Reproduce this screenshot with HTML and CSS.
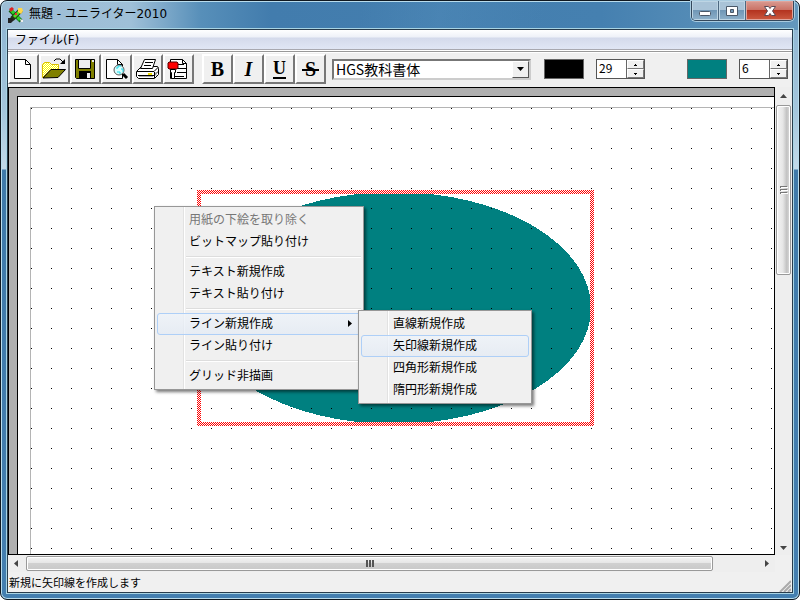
FILE: index.html
```html
<!DOCTYPE html>
<html lang="ja">
<head>
<meta charset="utf-8">
<title>無題 - ユニライター2010</title>
<link rel="stylesheet" href="styles.css">
</head>
<body>
<div class="window">
  <header class="titlebar">
    <svg class="app-icon" viewBox="0 0 16 16" width="16" height="16" aria-hidden="true">
      <path d="M2 3L13 14" stroke="#125c12" stroke-width="4"/>
      <path d="M3 3L12 13" stroke="#2bd52b" stroke-width="3"/>
      <path d="M13 3L4 12" stroke="#223c18" stroke-width="5"/>
      <path d="M12 4L6 10" stroke="#55dd22" stroke-width="3"/>
      <path d="M0 11h4l2 2-3 3H0z" fill="#222"/>
      <path d="M10 1h4l1 3-2 3-3-2z" fill="#ffd84a"/>
      <path d="M1 2l3-2 2 2-3 3z" fill="#e02020"/>
      <path d="M7 6h2v2H7z" fill="#e33"/>
      <path d="M12 12l3 1v2h-2z" fill="#eee"/>
    </svg>
    <h1 class="title">無題 - ユニライター2010</h1>
    <div class="caption-buttons">
      <button class="cap" aria-label="最小化"><svg viewBox="0 0 14 12" width="14" height="12"><rect x="1.500" y="6.500" width="11" height="4" rx="1" fill="#fff" stroke="#4a5868"/></svg></button>
      <button class="cap" aria-label="最大化"><svg viewBox="0 0 14 12" width="14" height="12"><path d="M1.500 1.500h11v9h-11zM5.500 4.500v3h3v-3z" fill="#fff" fill-rule="evenodd" stroke="#4a5868"/></svg></button>
      <button class="cap cap-close" aria-label="閉じる"><svg viewBox="0 0 14 12" width="14" height="12"><path d="M1.500 1.500h4L7 3.500l1.500-2h4L9.500 6l3 4.500h-4L7 8.500l-1.500 2h-4L4.500 6z" fill="#fff" stroke="#5a4a55"/></svg></button>
    </div>
  </header>

  <div class="client">
    <nav class="menubar"><button class="menu-title">ファイル(F)</button></nav>

    <div class="toolbar">
      <div class="group">
        <button class="tool" aria-label="新規">
          <svg viewBox="2 2 27 26" width="27" height="26"><path d="M6.500 5.500h11l5 5v14h-16z" fill="#fff" stroke="#000"/><path d="M17.500 5.500v5h5" fill="none" stroke="#000"/></svg>
        </button>
        <button class="tool" aria-label="開く">
          <svg viewBox="2 2 27 26" width="27" height="26">
            <defs><pattern id="straw" width="2" height="2" patternUnits="userSpaceOnUse"><rect width="2" height="2" fill="#fff"/><path d="M0 0h1v1H0zM1 1h1v1H1z" fill="#ff0"/></pattern></defs>
            <path d="M3.500 23.500v-13l2-2h5l2 2h7v5h-8z" fill="url(#straw)" stroke="#d8c000"/>
            <path d="M4 24l8-8.500h14.500L19 23.500z" fill="#808000" stroke="#000"/>
            <path d="M15 7l2-2h4l4 4" fill="none" stroke="#000"/><path d="M26 5v5h-5z"/>
          </svg>
        </button>
        <button class="tool" aria-label="保存">
          <svg viewBox="2 2 27 26" width="27" height="26"><path d="M5.500 5.500h19v19h-18l-1-1z" fill="#808000" stroke="#000"/><path d="M8.500 5.500h12v9h-12z" fill="#efefef" stroke="#000"/><path d="M9 17h12v8H9z"/><path d="M17 19h3v5h-3zM22 6h2v2h-2z" fill="#efefef"/></svg>
        </button>
        <button class="tool" aria-label="印刷プレビュー">
          <svg viewBox="2 2 27 26" width="27" height="26"><path d="M5.500 5.500h11l5 5v14h-16z" fill="#fff" stroke="#000"/><path d="M16.500 5.500v5h5" fill="none" stroke="#000"/><circle cx="18" cy="16" r="5" fill="#d8ffff" stroke="#555"/><path d="M15 14h2v-2h3M16 18h3v2M20 15h2v3" fill="none" stroke="#20d8e8"/><path d="M22 20l4 4" stroke="#000" stroke-width="3"/></svg>
        </button>
        <button class="tool" aria-label="印刷">
          <svg viewBox="2 2 27 26" width="27" height="26"><path d="M4.500 17.500l5-5h16l1 2v6l-4 4h-16l-2-2z" fill="#fff" stroke="#000"/><path d="M8.500 14.500l4-9h11l-3 9z" fill="#fff" stroke="#000"/><path d="M13 8.500h8M12 11.500h7M5 17.500h17l4-4M22.500 18v6M6 21.500h16l4-4" fill="none" stroke="#000"/><path d="M7 22.500h14M24 18v4" stroke="#aaa"/><path d="M16 19h4v2h-4z" fill="#f0e000"/></svg>
        </button>
        <button class="tool" aria-label="ページ設定">
          <svg viewBox="2 2 27 26" width="27" height="26"><path d="M7.500 5.500h12l4 4v15h-16z" fill="#fff" stroke="#000"/><path d="M19.500 5.500v4h4M15 10.500h6M15 14.500h9M14 18.500h10M12 22.500h9" fill="none" stroke="#000"/><path d="M6 8h8l1 1v5l-1 1H6l-1-1V9z" fill="#f00" stroke="#500"/><path d="M7.500 15.500h5v3h-1v6h-3v-6h-1z" fill="#fff" stroke="#000"/></svg>
        </button>
      </div>
      <div class="group">
        <button class="tool letter" aria-label="太字"><b>B</b></button>
        <button class="tool letter" aria-label="斜体"><i>I</i></button>
        <button class="tool letter under" aria-label="下線"><b>U</b></button>
        <button class="tool letter strike" aria-label="取り消し線"><b>S</b></button>
      </div>
      <div class="combo">
        <select aria-label="フォント"><option>HGS教科書体</option></select>
        <span class="drop" aria-hidden="true"><svg viewBox="0 0 7 4" width="7" height="4"><path d="M0 0h7L3.500 4z"/></svg></span>
      </div>
      <button class="swatch black" aria-label="文字色"></button>
      <div class="spin">
        <input value="29" aria-label="文字サイズ">
        <div class="steps">
          <button aria-label="大きく"><svg viewBox="0 0 3 2" width="3" height="2"><path d="M1 0h1v1h1v1H0V1h1z"/></svg></button>
          <button aria-label="小さく"><svg viewBox="0 0 3 2" width="3" height="2"><path d="M0 0h3v1H2v1H1V1H0z"/></svg></button>
        </div>
      </div>
      <button class="swatch teal" aria-label="線の色"></button>
      <div class="spin">
        <input value="6" aria-label="線の太さ">
        <div class="steps">
          <button aria-label="太く"><svg viewBox="0 0 3 2" width="3" height="2"><path d="M1 0h1v1h1v1H0V1h1z"/></svg></button>
          <button aria-label="細く"><svg viewBox="0 0 3 2" width="3" height="2"><path d="M0 0h3v1H2v1H1V1H0z"/></svg></button>
        </div>
      </div>
    </div>

    <main class="workspace">
      <div class="desk">
        <div class="paper">
          <svg class="drawing" width="100%" height="100%" aria-label="楕円形">
            <defs>
              <pattern id="grid" x="13" y="11" width="20" height="20" patternUnits="userSpaceOnUse"><rect width="1" height="1"/></pattern>
              <pattern id="check" width="2" height="2" patternUnits="userSpaceOnUse"><rect width="2" height="2" fill="#fff"/><path d="M0 0h1v1H0zM1 1h1v1H1z" fill="#f00"/></pattern>
            </defs>
            <path d="M12 2000V10H3000V11H13V2000z" fill="#b4b4b4"/>
            <ellipse cx="376" cy="211" rx="197" ry="116" fill="#008080"/>
            <rect x="13" y="11" width="100%" height="100%" fill="url(#grid)"/>
            <path d="M179 93h397v236H179zM183 97v228h389V97z" fill="url(#check)" fill-rule="evenodd"/>
          </svg>
        </div>
      </div>
      <div class="scroll vertical">
        <svg class="arrow" viewBox="0 0 7 4" width="7" height="4"><path d="M3.500 0L7 4H0z"/></svg>
        <div class="track"><div class="thumb"><svg viewBox="0 0 8 8" width="8" height="8"><path d="M0 0h7v2H0zM0 3h7v2H0zM0 6h7v2H0z" fill="#777"/><path d="M1 1h7v1H1zM1 4h7v1H1zM1 7h7v1H1z" fill="#fff"/></svg></div></div>
        <svg class="arrow" viewBox="0 0 7 4" width="7" height="4"><path d="M0 0h7L3.500 4z"/></svg>
      </div>
      <div class="scroll horizontal">
        <svg class="arrow" viewBox="0 0 4 7" width="4" height="7"><path d="M4 0v7L0 3.500z"/></svg>
        <div class="track"><div class="thumb"><svg viewBox="0 0 8 8" width="8" height="8"><path d="M0 0h2v7H0zM3 0h2v7H3zM6 0h2v7H6z" fill="#555"/></svg></div></div>
        <svg class="arrow" viewBox="0 0 4 7" width="4" height="7"><path d="M0 0l4 3.500L0 7z"/></svg>
      </div>

      <div class="menu context" role="menu">
        <button class="item" role="menuitem" disabled>用紙の下絵を取り除く</button>
        <button class="item" role="menuitem">ビットマップ貼り付け</button>
        <hr>
        <button class="item" role="menuitem">テキスト新規作成</button>
        <button class="item" role="menuitem">テキスト貼り付け</button>
        <hr>
        <button class="item hot" role="menuitem">ライン新規作成<svg viewBox="0 0 4 7" width="4" height="7"><path d="M0 0l4 3.500L0 7z"/></svg></button>
        <button class="item" role="menuitem">ライン貼り付け</button>
        <hr>
        <button class="item" role="menuitem">グリッド非描画</button>
      </div>
      <div class="menu submenu" role="menu">
        <button class="item" role="menuitem">直線新規作成</button>
        <button class="item hot" role="menuitem">矢印線新規作成</button>
        <button class="item" role="menuitem">四角形新規作成</button>
        <button class="item" role="menuitem">隋円形新規作成</button>
      </div>
    </main>

    <footer class="status">
      <span>新規に矢印線を作成します</span>
      <svg class="grip" viewBox="0 0 12 12" width="12" height="12"><path d="M1 12L12 1M5 12l7-7M9 12l3-3" stroke="#aaa" stroke-width="2"/></svg>
    </footer>
  </div>
</div>
</body>
</html>
```
FILE: styles.css
```css
* { box-sizing: border-box; }

body {
  margin: 0;
  background: #fff;
  font: 12px/16px "Noto Sans CJK JP", sans-serif;
  color: #000;
}

button, input, select {
  margin: 0;
  padding: 0;
  border: 0;
  border-radius: 0;
  background: none;
  font: inherit;
  color: inherit;
}

svg { display: block; flex: none; }

/* Window frame */
.window {
  display: flex;
  flex-direction: column;
  height: 100vh;
  padding: 0 6px 6px;
  border: 1px solid #101820;
  border-radius: 7px;
  background:
    linear-gradient(100deg, transparent 0 45%, #5590bd55 55%, transparent 68%) top / 100% 29px no-repeat,
    linear-gradient(90deg, #9dbdd5 0, #9fc0d8 130px, #578fb9 200px, #427cad 270px, #4580b0 600px, #6498bd 100%) top / 100% 29px no-repeat,
    linear-gradient(#8ab2d0 0, #a5c6dc 110px, #c3dae9 168px, #3f7aa9 169px, #447fb0 100%);
  box-shadow: inset 0 0 0 1px #b9dcec;
}

.titlebar {
  display: flex;
  align-items: flex-start;
  height: 28px;
  flex: none;
}

.app-icon { margin: 6px 5px 0 1px; }

.title {
  flex: 1;
  margin: 5px 0 0;
  font: 12px/16px "DejaVu Sans", "Noto Sans CJK JP", sans-serif;
}

.caption-buttons {
  display: flex;
  height: 20px;
  margin-right: -1px;
  border: 1px solid #34485c;
  border-top: 0;
  border-radius: 0 0 5px 5px;
  overflow: hidden;
  box-shadow: 0 0 0 1px #a9cbdf;
}

.cap {
  display: flex;
  align-items: center;
  justify-content: center;
  width: 27px;
  border-right: 1px solid #4c6880;
  background: linear-gradient(#a9c3d7 0 45%, #7097b6 50%, #8eb1ca);
  box-shadow: inset 0 0 0 1px #bdd5e4;
}

.cap-close {
  width: 47px;
  border-right: 0;
  background: linear-gradient(#d99b92 0, #cb7467 45%, #b43420 50%, #cb5a40);
  box-shadow: inset 0 0 0 1px #e0a59c;
}

.client {
  display: flex;
  flex: 1;
  flex-direction: column;
  min-height: 0;
  border: 1px solid #283c4c;
  background: #f0f0f0;
  box-shadow: 0 0 0 1px #a8d4e4;
}

.menubar {
  display: flex;
  align-items: center;
  height: 20px;
  flex: none;
  border-bottom: 1px solid #a8a8b0;
  background: linear-gradient(#fff 0, #eef1f8 7px, #d4daeb 8px, #e0e6f5 100%);
}

.menu-title {
  padding: 0 7px;
  font: 12px/16px "DejaVu Sans", "Noto Sans CJK JP", sans-serif;
}

/* Toolbar */
.toolbar {
  display: flex;
  align-items: center;
  height: 37px;
  flex: none;
  padding: 0 4px 0 0;
  border-top: 1px solid #fff;
  box-shadow: inset 0 1px #999, inset 0 2px #fff;
}

.group {
  display: flex;
  margin-right: 8px;
}

.group + .group { margin-right: 6px; }

.tool {
  display: flex;
  align-items: center;
  justify-content: center;
  width: 31px;
  height: 30px;
  border: 2px solid;
  border-color: #fff #777 #777 #fff;
}

.letter {
  font: 20px/24px "Liberation Serif", serif;
}

.letter i { font-weight: 700; }

.under b {
  height: 20px;
  border-bottom: 2px solid #000;
  font-size: 18px;
  line-height: 18px;
}

.strike b {
  padding: 0 3px;
  background: linear-gradient(#000, #000) center 12px / 100% 2px no-repeat;
}

.combo {
  position: relative;
  width: 199px;
  height: 21px;
  margin-right: 13px;
  border: 2px solid;
  border-color: #777 #ccc #ccc #777;
  background: #fff;
}

.combo select {
  display: block;
  width: 100%;
  height: 17px;
  padding-left: 2px;
  appearance: none;
  font-size: 14px;
  line-height: 16px;
}

.drop {
  position: absolute;
  top: 0;
  right: 0;
  bottom: 0;
  display: flex;
  align-items: center;
  justify-content: center;
  width: 17px;
  border: 1px solid;
  border-color: #fff #555 #555 #fff;
  background: #f0f0f0;
  pointer-events: none;
}

.swatch {
  width: 40px;
  height: 20px;
  border: 1px solid #666;
}

.swatch.black { margin-right: 12px; background: #000; }
.swatch.teal { margin: 0 12px 0 auto; background: #008080; }

.spin {
  display: flex;
  width: 49px;
  height: 20px;
  border: 1px solid #555;
  background: #fff;
}

.spin input {
  width: 29px;
  height: 16px;
  padding-left: 2px;
  font-size: 12px;
}

.steps {
  display: grid;
  flex: 1;
  padding-left: 1px;
  background: #666;
}

.steps button {
  display: flex;
  align-items: center;
  justify-content: center;
  border: 1px solid;
  border-color: #fff #777 #777 #fff;
  background: #f0f0f0;
}

/* Drawing area */
.workspace {
  position: relative;
  display: grid;
  flex: 1;
  grid-template: minmax(0, 1fr) 17px / minmax(0, 1fr) 17px;
  min-height: 0;
}

.desk {
  padding: 8px 0 0 8px;
  border: 1px solid #000;
  background: #b0b0b0;
}

.paper {
  height: 100%;
  border: solid #000;
  border-width: 1px 0 0 1px;
  background: #fff;
}

.drawing { shape-rendering: crispEdges; }

.scroll {
  display: flex;
  align-items: center;
  background: #eee;
}

.vertical {
  flex-direction: column;
  padding: 7px 0 5px;
}

.horizontal { padding: 0 6px; }

.track {
  display: flex;
  flex: 1;
}

.vertical .track {
  width: 15px;
  margin: 7px 0 6px;
}

.horizontal .track {
  height: 15px;
  margin: 0 8px;
}

.thumb {
  display: flex;
  align-items: center;
  justify-content: center;
  border: 1px solid #999;
  border-radius: 2px;
  box-shadow: inset 0 0 0 1px #fff;
}

.vertical .thumb {
  width: 100%;
  height: 39%;
  background: linear-gradient(90deg, #f4f4f4, #e6e6e6 45%, #c2c2c2 75%, #ddd);
}

.horizontal .thumb {
  width: 94%;
  background: linear-gradient(#f4f4f4, #e6e6e6 45%, #d0d0d0 50%, #c8c8c8);
}

.arrow { fill: #444; }

/* Pop-up menus */
.menu {
  position: absolute;
  padding: 2px;
  border: 1px solid #979797;
  background: linear-gradient(90deg, transparent 28px, #e2e2e2 28px 29px, #fff 29px 30px, transparent 30px) #f0f0f0;
  box-shadow: 2px 2px 3px #0008;
}

.context {
  top: 119px;
  left: 146px;
  width: 210px;
}

.submenu {
  top: 223px;
  left: 350px;
  width: 174px;
}

.item {
  display: flex;
  align-items: center;
  justify-content: space-between;
  width: 100%;
  height: 22px;
  padding: 0 8px 2px 31px;
  border: 1px solid transparent;
  border-radius: 3px;
  text-align: left;
}

.item:disabled { color: #777; }

.hot {
  border-color: #aecff7;
  background: linear-gradient(#eef3f9cc, #e2eaf5aa);
}

.menu hr {
  height: 2px;
  margin: 3px 0 3px 29px;
  border: 0;
  border-top: 1px solid #ddd;
  background: #fff;
}

.status {
  display: flex;
  align-items: center;
  justify-content: space-between;
  height: 20px;
  flex: none;
  padding: 0 1px;
  font-size: 11px;
}

.grip { align-self: flex-end; }
```
